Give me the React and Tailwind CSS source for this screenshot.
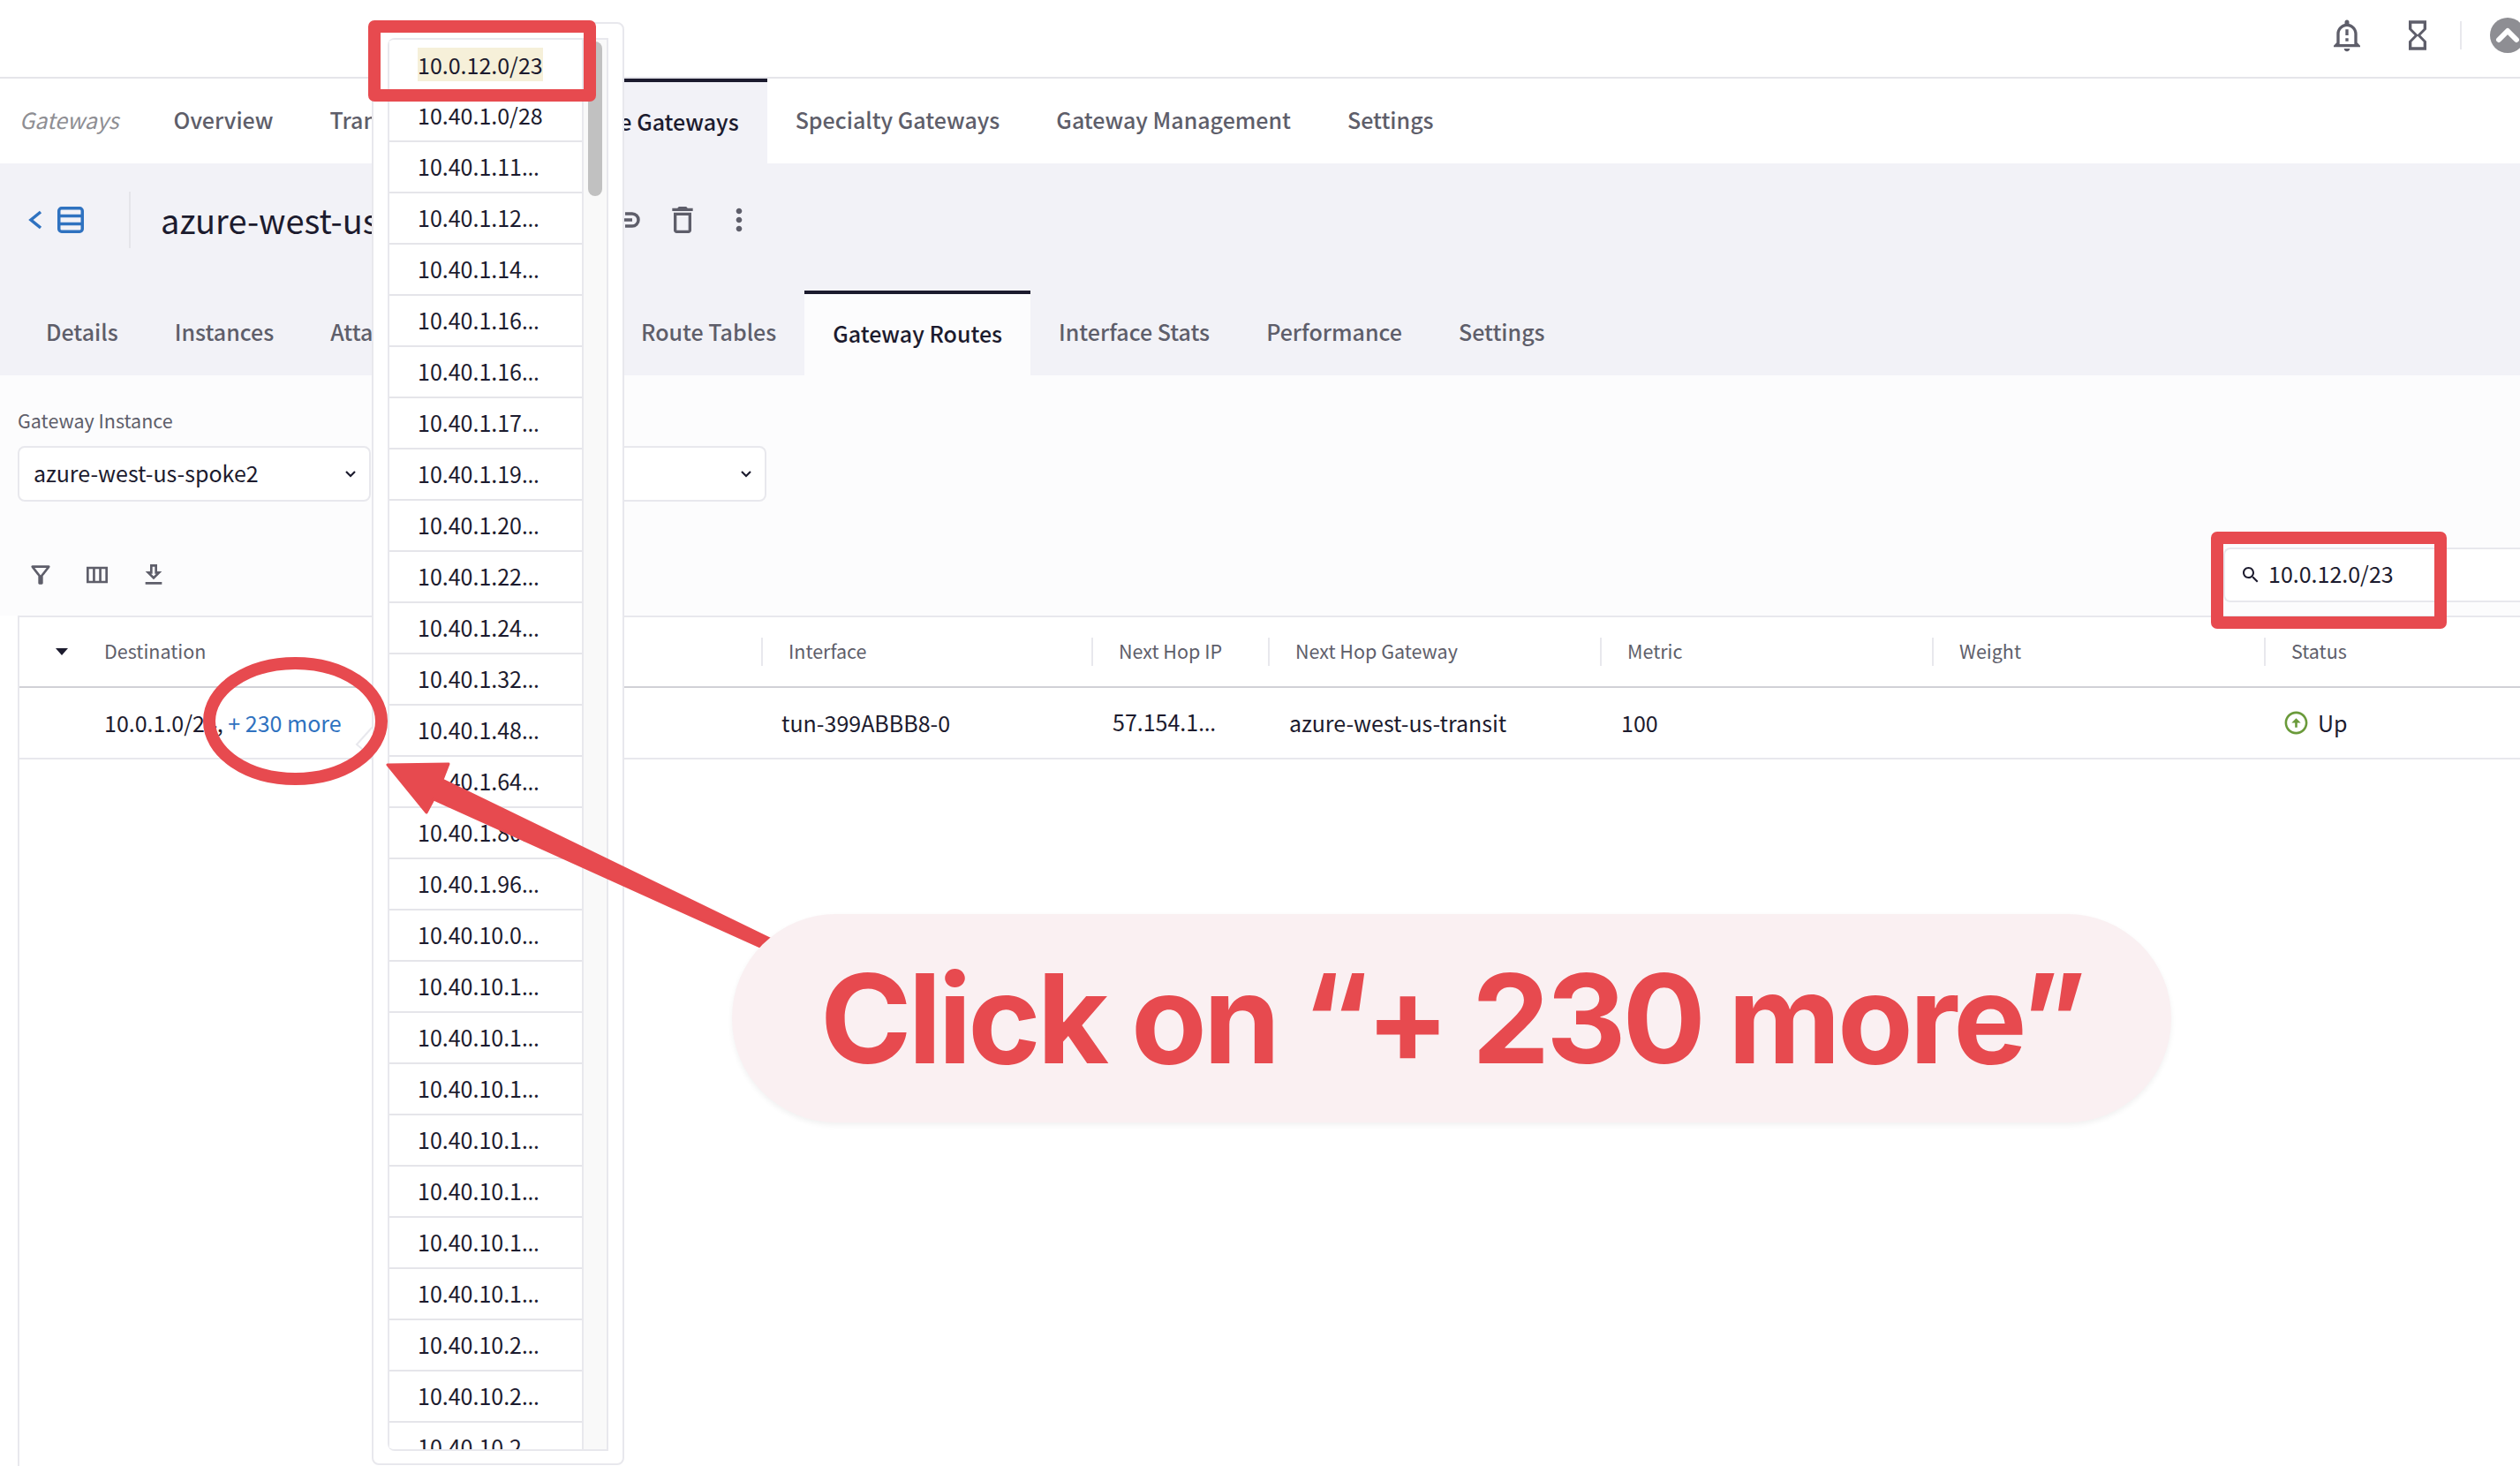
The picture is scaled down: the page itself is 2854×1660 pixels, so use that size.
import React from 'react';

const routes = [
  '10.40.1.0/28', '10.40.1.11…', '10.40.1.12…', '10.40.1.14…', '10.40.1.16…', '10.40.1.16…', '10.40.1.17…',
  '10.40.1.19…', '10.40.1.20…', '10.40.1.22…', '10.40.1.24…', '10.40.1.32…', '10.40.1.48…', '10.40.1.64…',
  '10.40.1.80…', '10.40.1.96…', '10.40.10.0…', '10.40.10.1…', '10.40.10.1…', '10.40.10.1…', '10.40.10.1…',
  '10.40.10.1…', '10.40.10.1…', '10.40.10.1…', '10.40.10.2…', '10.40.10.2…', '10.40.10.2…',
];

const navTabs = ['Overview', 'Transit Gateways', 'Spoke Gateways', 'Specialty Gateways', 'Gateway Management', 'Settings'];
const subTabs = ['Details', 'Instances', 'Attachments', 'Policy', 'Route Tables', 'Gateway Routes', 'Interface Stats', 'Performance', 'Settings'];

function Icon({ d, size = 40, className = 'text-[#5e5e6a]' }) {
  return (
    <svg width={size} height={size} viewBox="0 0 24 24" fill="currentColor" className={`shrink-0 ${className}`}>
      <path d={d} />
    </svg>
  );
}

function Chevron() {
  return (
    <svg width="14" height="10" viewBox="0 0 14 10" fill="none" stroke="#1c1b2e" strokeWidth="2.2" className="shrink-0">
      <path d="M2 2l5 5 5-5" />
    </svg>
  );
}

// the CJK font centres its ellipsis, the reference has it on the baseline
function Clipped({ text }) {
  if (!text.endsWith('…')) return text;
  return (
    <>
      {text.slice(0, -1)}
      <span className="font-['Noto_Sans',sans-serif]">…</span>
    </>
  );
}

function Select({ children, className }) {
  return (
    <div className={`flex h-[63px] items-center justify-between rounded-lg border-2 border-[#e8e8ed] bg-white pl-[16px] pr-[14px] text-[25px] text-[#1c1b2e] ${className}`}>
      <span className="pb-[2px]">{children}</span>
      <Chevron />
    </div>
  );
}

function TopBar() {
  return (
    <header className="flex h-[89px] items-center justify-end overflow-hidden border-b-2 border-[#e5e5ea] bg-white pb-[7px]">
      <div className="mr-[40px]">
        <Icon d="M10.01 21.01c0 1.1.89 1.99 1.99 1.99s1.99-.89 1.99-1.99h-3.98zM12 6c2.76 0 5 2.24 5 5v7H7v-7c0-2.76 2.24-5 5-5zm0-4.5c-.83 0-1.5.67-1.5 1.5v1.17C7.36 4.85 5 7.65 5 11v6l-2 2v1h18v-1l-2-2v-6c0-3.35-2.36-6.15-5.5-6.83V3c0-.83-.67-1.5-1.5-1.5zM11 8h2v4h-2zm0 6h2v2h-2z" />
      </div>
      <div className="mr-[28px]">
        <Icon d="M6 2v6h.01L6 8.01 10 12l-4 4 .01.01H6V22h12v-5.99h-.01L18 16l-4-4 4-3.99-.01-.01H18V2H6zm10 14.5V20H8v-3.5l4-4 4 4zm-4-5l-4-4V4h8v3.5l-4 4z" />
      </div>
      <div className="mr-[32px] h-[32px] w-[2px] bg-[#e8e8ed]" />
      <div className="-mr-[6px] flex h-[40px] w-[40px] items-center justify-center rounded-full bg-[#8e8e93]">
        <svg width="28" height="20" viewBox="0 0 28 20" fill="none" stroke="#fff" strokeWidth="6" strokeLinecap="round" strokeLinejoin="round">
          <path d="M4 15L14 5l10 10" />
        </svg>
      </div>
    </header>
  );
}

function NavTabs() {
  return (
    <nav className="flex h-[96px] bg-white text-[25px] font-medium text-[#5e5e6a]">
      <span className="flex items-center pb-[3px] pl-[22px] pr-[30px] font-normal italic text-[#8e8e93]">Gateways</span>
      {navTabs.map((t) => (
        <span
          key={t}
          className={t === 'Spoke Gateways'
            ? 'flex items-center border-t-4 border-[#1c1b2e] bg-[#f2f2f7] px-8 pb-[3px] text-[#1c1b2e]'
            : 'flex items-center px-8 pb-[3px]'}
        >
          {t}
        </span>
      ))}
    </nav>
  );
}

function GatewayHeader() {
  return (
    <section className="bg-[#f2f2f7]">
      <div className="flex h-[144px] items-start pt-[32px]">
        <div className="flex h-[64px] w-[148px] items-center border-r-2 border-[#e5e5ea] pl-[32px]">
          <svg width="16" height="24" viewBox="0 0 16 24" fill="none" stroke="#2f72c0" strokeWidth="3.5" className="mr-[17px]">
            <path d="M14 3L3 12l11 9" />
          </svg>
          <svg width="30" height="30" viewBox="0 0 30 30" fill="none" stroke="#2f72c0" strokeWidth="3.5">
            <rect x="1.75" y="1.75" width="26.5" height="26.5" rx="3" />
            <path d="M1 10.5h28M1 19.5h28" />
          </svg>
        </div>
        <h1 className="ml-[34px] flex h-[64px] w-[524px] items-center whitespace-nowrap pb-[2px] text-[38px] font-normal text-[#1c1b2e]">azure-west-us-spoke2</h1>
        <div className="flex h-[64px] items-center">
          <svg width="20" height="24" viewBox="0 0 20 24" fill="none" stroke="#5e5e6a" strokeWidth="3.5" className="mr-[27px]">
            <path d="M2 5h8a7 7 0 0 1 0 14H2M1 12h9" />
          </svg>
          <Icon d="M6 19c0 1.1.9 2 2 2h8c1.1 0 2-.9 2-2V7H6v12zM8 9h8v10H8V9zm7.5-5l-1-1h-5l-1 1H5v2h14V4h-3.5z" />
          <div className="ml-[24px]">
            <Icon d="M12 8c1.1 0 2-.9 2-2s-.9-2-2-2-2 .9-2 2 .9 2 2 2zm0 2c-1.1 0-2 .9-2 2s.9 2 2 2 2-.9 2-2-.9-2-2-2zm0 6c-1.1 0-2 .9-2 2s.9 2 2 2 2-.9 2-2-.9-2-2-2z" />
          </div>
        </div>
      </div>
      <div className="flex h-[96px] pl-[20px] text-[25px] font-medium text-[#5e5e6a]">
        {subTabs.map((t) => (
          <span
            key={t}
            className={t === 'Gateway Routes'
              ? 'flex items-center border-t-4 border-[#1c1b2e] bg-[#fcfcfd] px-8 pb-[3px] text-[#1c1b2e]'
              : 'flex items-center px-8 pb-[3px]'}
          >
            {t}
          </span>
        ))}
      </div>
    </section>
  );
}

function Filters() {
  return (
    <section className="h-[272px] overflow-hidden bg-[#fcfcfd]">
      <div className="px-[20px] pt-[37px]">
        <p className="text-[21.5px] leading-[28px] text-[#5e5e6a]">Gateway Instance</p>
        <div className="mt-[15px] flex gap-[26px]">
          <Select className="w-[400px]">azure-west-us-spoke2</Select>
          <Select className="w-[422px]" />
        </div>
      </div>
      <div className="mt-[52px] flex items-center justify-between pl-[30px]">
        <div className="flex items-center gap-[32px]">
          <Icon size={32} d="M7 6h10l-5.01 6.3L7 6zm-2.75-.39C6.27 8.2 10 13 10 13v6c0 .55.45 1 1 1h2c.55 0 1-.45 1-1v-6s3.72-4.8 5.74-7.39c.51-.66.04-1.61-.79-1.61H5.04c-.83 0-1.3.95-.79 1.61z" />
          <Icon size={32} d="M3 5v14h18V5H3zm5.33 12H5V7h3.33v10zm5.34 0h-3.33V7h3.33v10zM19 17h-3.33V7H19v10z" />
          <Icon size={32} d="M19 9h-4V3H9v6H5l7 7 7-7zm-8 2V5h2v6h1.17L12 13.17 9.83 11H11zm-6 7h14v2H5z" />
        </div>
        <div className="flex h-[62px] w-[336px] items-center rounded-l-lg border-y-2 border-l-2 border-[#e8e8ed] bg-white pl-[17px] text-[25px] text-[#1c1b2e]">
          <Icon size={24} className="text-[#1c1b2e]" d="M15.5 14h-.79l-.28-.27C15.41 12.59 16 11.11 16 9.5 16 5.91 13.09 3 9.5 3S3 5.91 3 9.5 5.91 16 9.5 16c1.61 0 3.09-.59 4.23-1.57l.27.28v.79l5 4.99L20.49 19l-4.99-5zm-6 0C7.01 14 5 11.99 5 9.5S7.01 5 9.5 5 14 7.01 14 9.5 11.99 14 9.5 14z" />
          <span className="ml-[8px] pb-[2px]">10.0.12.0/23</span>
        </div>
      </div>
    </section>
  );
}

function HeaderCell({ children }) {
  return (
    <div className="flex items-center">
      <span className="mr-[29px] h-[32px] w-[2px] bg-[#e8e8ed]" />
      <span className="pb-[2px]">{children}</span>
    </div>
  );
}

const cols = 'grid grid-cols-[840px_374px_200px_376px_376px_376px_1fr]';

function RoutesTable() {
  return (
    <section className="ml-[20px] h-[963px] border-l-2 border-t-2 border-[#e8e8ed] bg-white">
      <div className={`${cols} h-[78px] text-[21.5px] text-[#5e5e6a]`}>
        <div className="flex items-center">
          <svg width="14" height="8" viewBox="0 0 14 8" className="ml-[41px] mr-[41px]">
            <path d="M0 0h14L7 8z" fill="#1c1b2e" />
          </svg>
          <span className="pb-[2px]">Destination</span>
        </div>
        <HeaderCell>Interface</HeaderCell>
        <HeaderCell>Next Hop IP</HeaderCell>
        <HeaderCell>Next Hop Gateway</HeaderCell>
        <HeaderCell>Metric</HeaderCell>
        <HeaderCell>Weight</HeaderCell>
        <HeaderCell>Status</HeaderCell>
      </div>
      <div className={`${cols} h-[83px] items-center border-y-2 border-b-[#e8e8ed] border-t-[#d1d1d6] text-[25px] text-[#1c1b2e]`}>
        <div className="pl-[96px]">
          10.0.1.0/24, <span className="text-[#2f72c0]">+ 230 more</span>
        </div>
        <div className="pl-[23px]">tun-399ABBB8-0</div>
        <div className="pl-[24px]"><Clipped text="57.154.1…" /></div>
        <div className="pl-[24px]">azure-west-us-transit</div>
        <div className="pl-[24px]">100</div>
        <div />
        <div className="flex items-center pl-[21px]">
          <Icon size={31} className="text-[#6a9a3a]" d="M12 20c-4.41 0-8-3.59-8-8s3.59-8 8-8 8 3.59 8 8-3.59 8-8 8m0 2c5.52 0 10-4.48 10-10S17.52 2 12 2 2 6.48 2 12s4.48 10 10 10zm-1-10v4h2v-4h3l-4-4-4 4h3z" />
          <span className="ml-[9px]">Up</span>
        </div>
      </div>
    </section>
  );
}

function RoutesPopover() {
  return (
    <div className="absolute left-[421px] top-[25px] h-[1634px] w-[286px] rounded-lg border-2 border-[#e8e8ed] bg-white pl-[16px] pr-[16px] pt-[16px]">
      <div className="relative flex h-[1600px] overflow-hidden rounded-l-lg border-b-2 border-t-2 border-[#e8e8ed]">
        <ul className="w-[222px] border-x-2 border-[#e8e8ed] bg-white text-[25px] text-[#1c1b2e]">
          <li className="flex h-[58px] items-center border-b-2 border-[#e5e5ea] pl-[32px]">
            <span className="bg-[#f6f0d9] leading-[38px]">10.0.12.0/23</span>
          </li>
          {routes.map((r, i) => (
            <li key={i} className="flex h-[58px] shrink-0 items-center border-b-2 border-[#e5e5ea] pl-[32px]">
              <span><Clipped text={r} /></span>
            </li>
          ))}
        </ul>
        <div className="relative flex-1 border-r-2 border-[#e8e8ed] bg-[#f9f9f9]">
          <div className="absolute left-[5px] top-[2px] h-[175px] w-[16px] rounded-full bg-[#c1c1c1]" />
        </div>
      </div>
    </div>
  );
}

function Annotations() {
  return (
    <svg className="pointer-events-none absolute left-0 top-0" width="2854" height="1660" viewBox="0 0 2854 1660" fill="none">
      <path d="M422 823L404 843L422 858" stroke="#e8e8ed" strokeWidth="2" fill="#fff" />
      <rect x="424" y="30" width="244" height="78" stroke="#e74a4f" strokeWidth="14" strokeLinejoin="round" />
      <rect x="2511" y="609" width="253" height="96" stroke="#e74a4f" strokeWidth="14" strokeLinejoin="round" />
      <ellipse cx="334.5" cy="816.5" rx="97.5" ry="65.5" stroke="#e74a4f" strokeWidth="14" />
      <path
        d="M439 866L508 865L501 883L872 1063L863 1073L491 905L483 920Z"
        fill="#e74a4f"
        stroke="#e74a4f"
        strokeWidth="3"
        strokeLinejoin="round"
      />
    </svg>
  );
}

export default function App() {
  return (
    <div className="relative h-[1660px] w-[2854px] overflow-hidden bg-white font-['Noto_Sans_CJK_JP','Noto_Sans',sans-serif]">
      <TopBar />
      <NavTabs />
      <GatewayHeader />
      <Filters />
      <RoutesTable />
      <RoutesPopover />
      <Annotations />
      <div className="absolute left-[829px] top-[1035px] flex h-[236px] w-[1630px] items-center justify-center rounded-full bg-[#faf0f2] font-['Inter',sans-serif] text-[140px] font-bold tracking-[-4px] text-[#e74a4f] shadow-[0_3px_6px_rgba(0,0,0,0.06)]">
        Click on “+ 230 more”
      </div>
    </div>
  );
}
